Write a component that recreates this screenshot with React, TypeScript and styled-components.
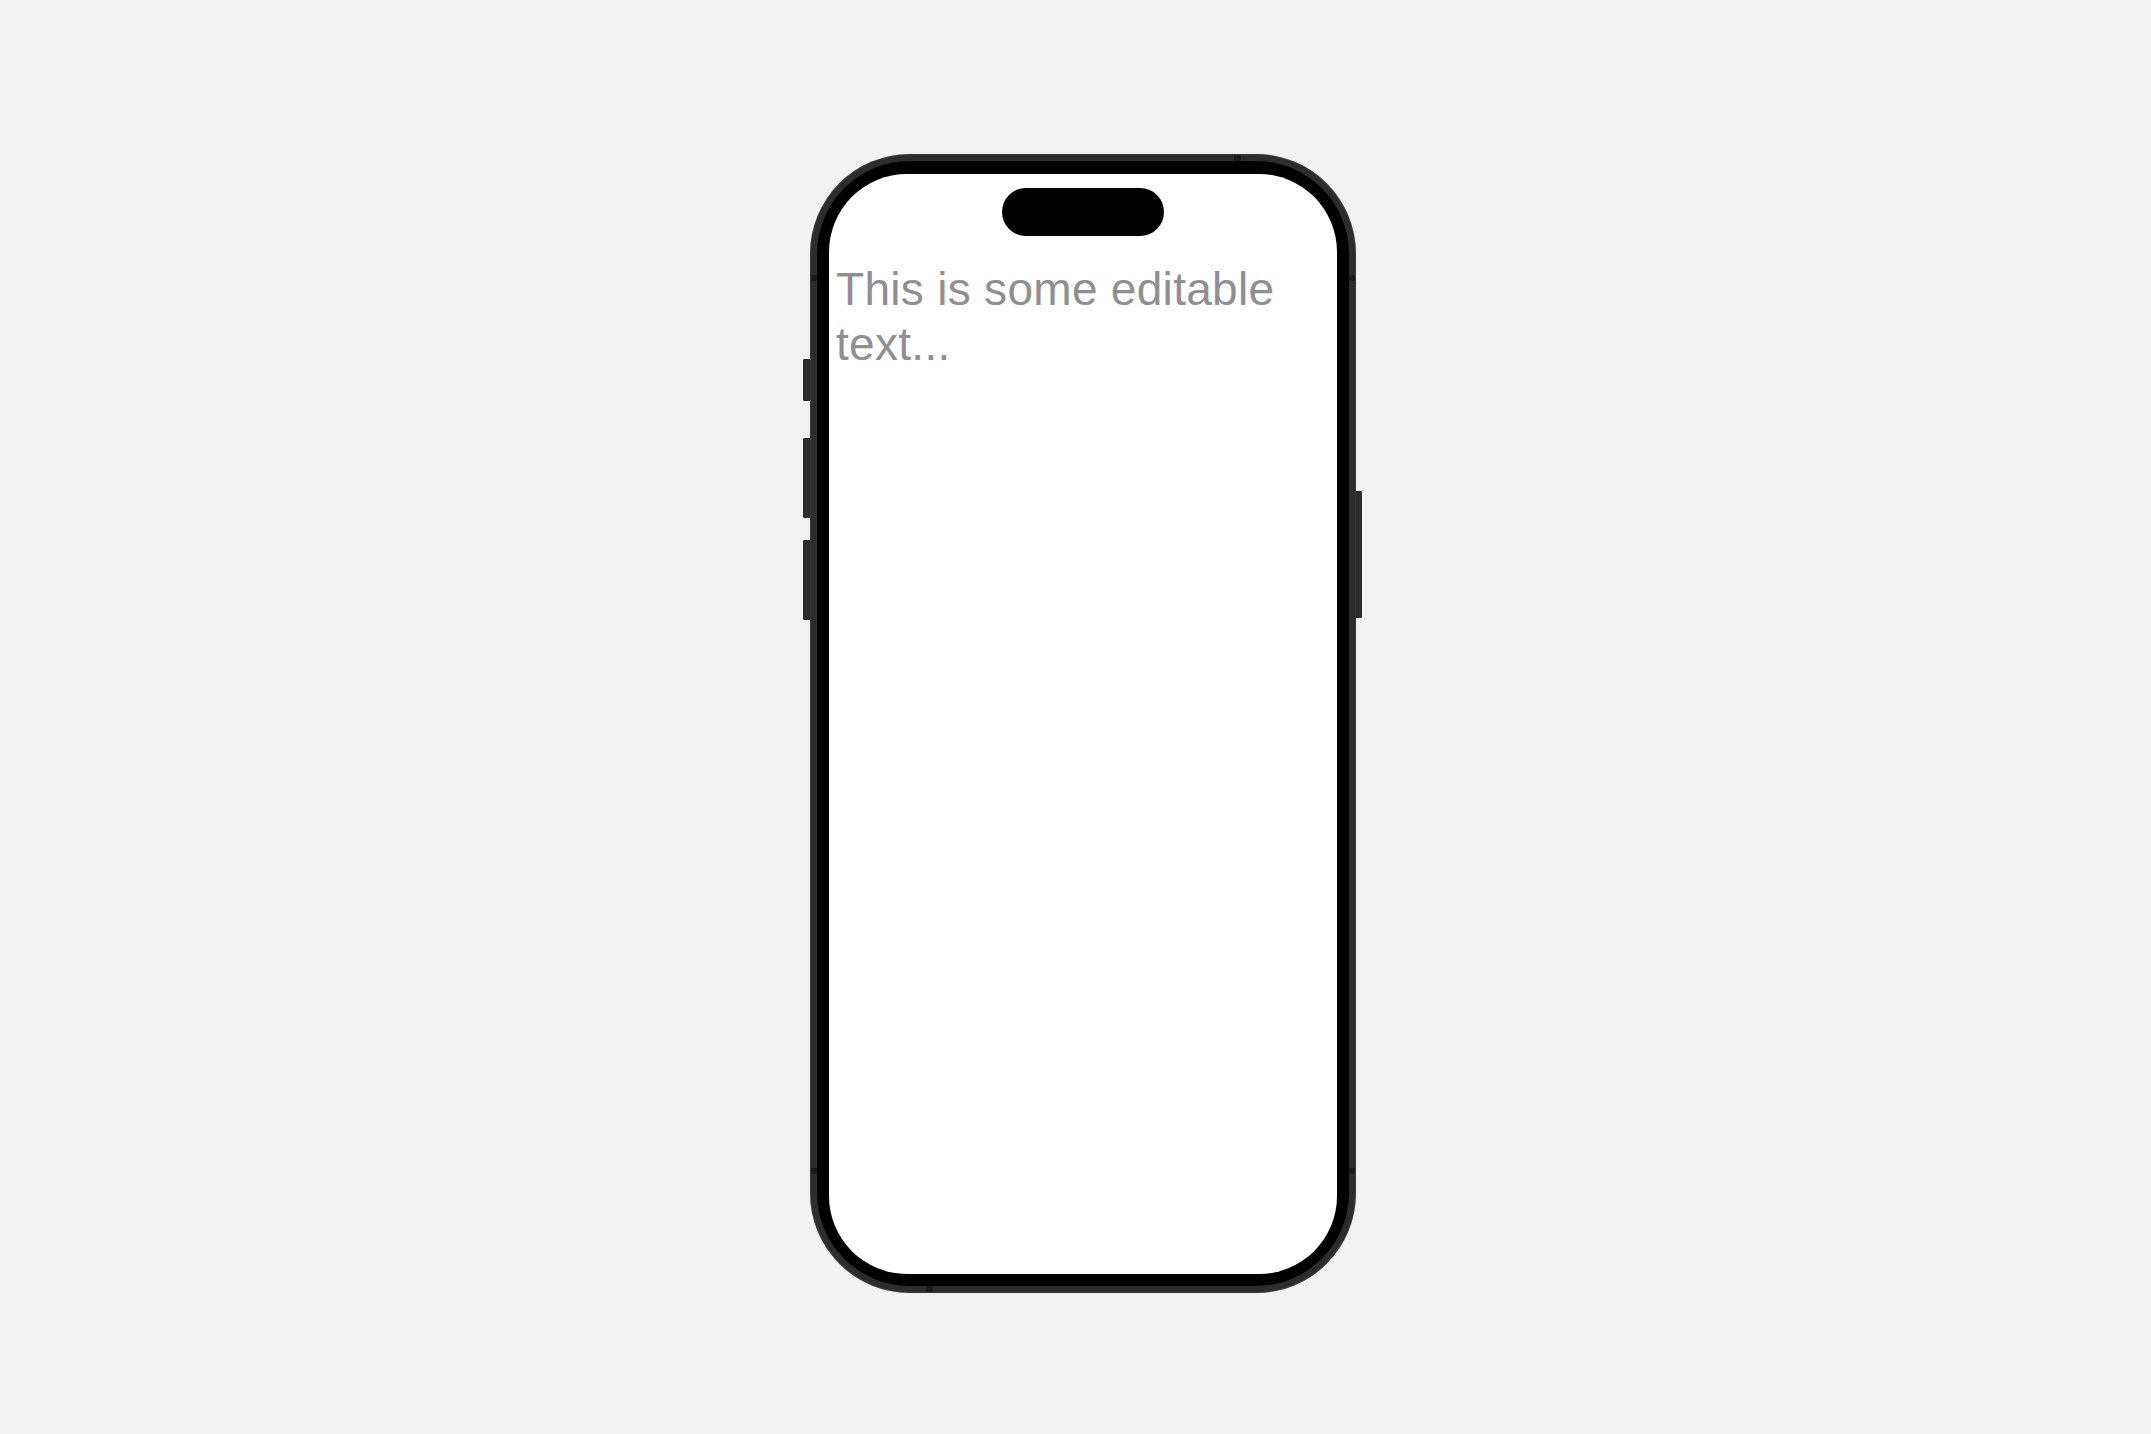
import React from "react";
import styled, { createGlobalStyle } from "styled-components";

const GlobalStyle = createGlobalStyle`
  html, body {
    margin: 0;
    padding: 0;
    background: #f2f2f2;
  }
  body {
    font-family: "Liberation Sans", Arial, Helvetica, sans-serif;
  }
`;

const Stage = styled.div`
  box-sizing: border-box;
  width: 100vw;
  height: 100vh;
  display: flex;
  align-items: center;
  justify-content: center;
  padding-left: 14px;
  padding-top: 13px;
  background: #f2f2f2;
`;

const Phone = styled.div`
  display: flex;
  align-items: flex-start;
`;

const Rail = styled.div<{ $offset: number }>`
  display: flex;
  flex-direction: column;
  padding-top: ${(p) => p.$offset}px;
`;

const SideButton = styled.div<{ $side: "left" | "right"; $gap?: number; $height: number }>`
  width: ${(p) => (p.$side === "left" ? 7 : 6)}px;
  height: ${(p) => p.$height}px;
  margin-top: ${(p) => p.$gap ?? 0}px;
  background: #2e2e2e;
  border-radius: ${(p) => (p.$side === "left" ? "2px 0 0 2px" : "0 2px 2px 0")};
  box-shadow: inset 0 0 0 1px #272727;
`;

const band = "linear-gradient(#1c1c1c, #1c1c1c)";

const Frame = styled.div`
  box-sizing: border-box;
  width: 546px;
  height: 1139px;
  padding: 7px;
  border-radius: 100px;
  background-color: #2d2d2d;
  background-image: ${band}, ${band}, ${band}, ${band}, ${band}, ${band};
  background-repeat: no-repeat;
  background-size: 8px 6px, 8px 6px, 8px 6px, 8px 6px, 7px 8px, 7px 8px;
  background-position: 0 121px, 100% 121px, 0 1014px, 100% 1014px, 424px 0,
    116px 100%;
  box-shadow: inset 0 0 0 1px #3a3a3a, 0 0 1px rgba(0, 0, 0, 0.25);
`;

const Bezel = styled.div`
  box-sizing: border-box;
  width: 100%;
  height: 100%;
  padding: 13px 12px 12px 12px;
  border-radius: 93px;
  background: #000;
  display: flex;
`;

const Screen = styled.div`
  position: relative;
  flex: 1;
  border-radius: 78px;
  background: #ffffff;
  overflow: hidden;
  display: flex;
  flex-direction: column;
  padding: 88px 7px 0 7px;
`;

const Island = styled.div`
  position: absolute;
  top: 14px;
  left: 50%;
  transform: translateX(-50%);
  width: 162px;
  height: 48px;
  border-radius: 24px;
  background: #000;
`;

const EditableText = styled.div`
  font-family: "Liberation Sans", Arial, Helvetica, sans-serif;
  font-size: 46px;
  line-height: 55px;
  letter-spacing: 0.3px;
  color: #8e8e93;
  outline: none;
  word-wrap: break-word;
`;

export default function App() {
  return (
    <>
      <GlobalStyle />
      <Stage>
        <Phone>
          <Rail $offset={205}>
            <SideButton $side="left" $height={42} />
            <SideButton $side="left" $gap={37} $height={80} />
            <SideButton $side="left" $gap={22} $height={80} />
          </Rail>
          <Frame>
            <Bezel>
              <Screen>
                <Island />
                <EditableText contentEditable suppressContentEditableWarning>
                  This is some editable text...
                </EditableText>
              </Screen>
            </Bezel>
          </Frame>
          <Rail $offset={337}>
            <SideButton $side="right" $height={127} />
          </Rail>
        </Phone>
      </Stage>
    </>
  );
}
